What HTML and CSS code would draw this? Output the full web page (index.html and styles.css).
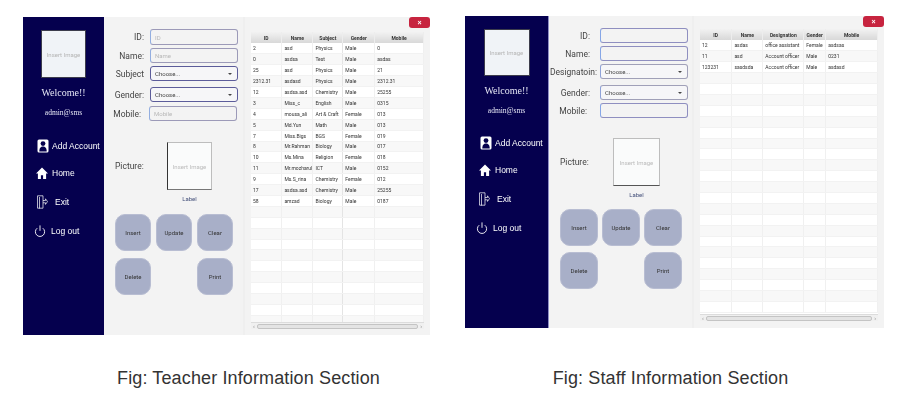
FILE: index.html
```html
<!DOCTYPE html>
<html lang="en">
<head>
    <meta charset="UTF-8" />
    <meta name="viewport" content="width=device-width, initial-scale=1.0" />
    <title>Teacher and Staff Information</title>
    <link rel="stylesheet" href="styles.css">
</head>
<body>
    <div class="figures">
        <figure class="fig fig-teacher">
            <div class="app">
                <aside class="sidebar">
                    <div class="avatar">Insert Image</div>
                    <div class="welcome">Welcome!!</div>
                    <div class="admin">admin@sms</div>
                    <nav class="nav">
                        <a class="nav-item item-add"><svg class="icon" viewBox="0 0 12 14"><rect x="0.5" y="0.5" width="11" height="13" rx="1.5" fill="#fff"/><circle cx="6" cy="4.6" r="2.4" fill="#05004e"/><path d="M2.3 12.4c0-3.6 1.5-5 3.7-5s3.7 1.4 3.7 5z" fill="#05004e"/></svg>Add Account</a>
                        <a class="nav-item item-home"><svg class="icon" viewBox="0 0 12 14"><path d="M6 1.5 0 7.6h1.9V13h3V9.2h2.2V13h3V7.6H12z" fill="#fff"/></svg>Home</a>
                        <a class="nav-item item-exit"><svg class="icon" viewBox="0 0 12 14" fill="none" stroke="#fff" stroke-width="0.7"><path d="M1.5 0.8h5.5v12.4H1.5M1.5 0.8v12.4M3.5 2v11.5M7 5.5h2.5V3.8l2 2.8-2 2.8V7.8H7"/></svg>Exit</a>
                        <a class="nav-item item-logout"><svg class="icon" viewBox="0 0 12 14" fill="none" stroke="#fff" stroke-width="0.9"><path d="M3.2 4.2a4.6 4.6 0 1 0 5.6 0M6 1.4v5.4"/></svg>Log out</a>
                    </nav>
                </aside>
                <main class="main">
                    <form class="form">
                        <label class="row row-first"><span class="row-label">ID:</span><input class="field" type="text" placeholder="ID"></label>
                        <label class="row"><span class="row-label">Name:</span><input class="field" type="text" placeholder="Name"></label>
                        <label class="row"><span class="row-label">Subject</span><span class="select"><select class="field"><option>Choose...</option></select></span></label>
                        <label class="row row-wide"><span class="row-label">Gender:</span><span class="select"><select class="field"><option>Choose...</option></select></span></label>
                        <label class="row row-mobile"><span class="row-label label-mobile">Mobile:</span><input class="field field-mobile" type="text" placeholder="Mobile"></label>
                    </form>
                    <div class="picture">
                        <span class="picture-label">Picture:</span>
                        <div class="picture-col">
                            <div class="picture-box">Insert Image</div>
                            <div class="picture-caption">Label</div>
                        </div>
                    </div>
                    <div class="buttons">
                        <button class="btn" type="button">Insert</button>
                        <button class="btn" type="button">Update</button>
                        <button class="btn" type="button">Clear</button>
                        <button class="btn" type="button">Delete</button>
                        <button class="btn btn-print" type="button">Print</button>
                    </div>
                </main>
                <section class="panel">
                    <button class="close" type="button">&times;</button>
                    <div class="grid">
                        <table class="table">
                            <colgroup><col class="c1"><col class="c2"><col class="c3"><col class="c4"><col class="c5"></colgroup>
                            <thead><tr><th>ID</th><th>Name</th><th>Subject</th><th>Gender</th><th>Mobile</th></tr></thead>
                            <tbody>
                                <tr><td>2</td><td>asd</td><td>Physics</td><td>Male</td><td>0</td></tr>
                                <tr><td>0</td><td>asdsa</td><td>Test</td><td>Male</td><td>asdas</td></tr>
                                <tr><td>25</td><td>asd</td><td>Physics</td><td>Male</td><td>21</td></tr>
                                <tr><td>2312.31</td><td>asdasd</td><td>Physics</td><td>Male</td><td>2312.31</td></tr>
                                <tr><td>12</td><td>asdsa.asd</td><td>Chemistry</td><td>Male</td><td>25255</td></tr>
                                <tr><td>3</td><td>Miss_c</td><td>English</td><td>Male</td><td>0315</td></tr>
                                <tr><td>4</td><td>mousa_ali</td><td>Art &amp; Craft</td><td>Female</td><td>013</td></tr>
                                <tr><td>5</td><td>Md.Yun</td><td>Math</td><td>Male</td><td>013</td></tr>
                                <tr><td>7</td><td>Miss.Bigs</td><td>BGS</td><td>Female</td><td>019</td></tr>
                                <tr><td>8</td><td>Mr.Rahman</td><td>Biology</td><td>Male</td><td>017</td></tr>
                                <tr><td>10</td><td>Ms.Mina</td><td>Religion</td><td>Female</td><td>018</td></tr>
                                <tr><td>11</td><td>Mr.mozharul</td><td>ICT</td><td>Male</td><td>0152</td></tr>
                                <tr><td>9</td><td>Ms.S_rina</td><td>Chemistry</td><td>Female</td><td>012</td></tr>
                                <tr><td>17</td><td>asdsa.asd</td><td>Chemistry</td><td>Male</td><td>25255</td></tr>
                                <tr><td>58</td><td>amzad</td><td>Biology</td><td>Male</td><td>0187</td></tr>
                                <tr><td></td><td></td><td></td><td></td><td></td></tr>
                                <tr><td></td><td></td><td></td><td></td><td></td></tr>
                                <tr><td></td><td></td><td></td><td></td><td></td></tr>
                                <tr><td></td><td></td><td></td><td></td><td></td></tr>
                                <tr><td></td><td></td><td></td><td></td><td></td></tr>
                                <tr><td></td><td></td><td></td><td></td><td></td></tr>
                                <tr><td></td><td></td><td></td><td></td><td></td></tr>
                                <tr><td></td><td></td><td></td><td></td><td></td></tr>
                                <tr><td></td><td></td><td></td><td></td><td></td></tr>
                                <tr><td></td><td></td><td></td><td></td><td></td></tr>
                                <tr><td></td><td></td><td></td><td></td><td></td></tr>
                            </tbody>
                        </table>
                        <div class="scrollbar"><span class="scroll-arrow">&lsaquo;</span><span class="scroll-thumb"></span><span class="scroll-arrow">&rsaquo;</span></div>
                    </div>
                </section>
            </div>
            <figcaption class="caption">Fig: Teacher Information Section</figcaption>
        </figure>

        <figure class="fig fig-staff">
            <div class="app">
                <aside class="sidebar">
                    <div class="avatar">Insert Image</div>
                    <div class="welcome">Welcome!!</div>
                    <div class="admin">admin@sms</div>
                    <nav class="nav">
                        <a class="nav-item item-add"><svg class="icon" viewBox="0 0 12 14"><rect x="0.5" y="0.5" width="11" height="13" rx="1.5" fill="#fff"/><circle cx="6" cy="4.6" r="2.4" fill="#05004e"/><path d="M2.3 12.4c0-3.6 1.5-5 3.7-5s3.7 1.4 3.7 5z" fill="#05004e"/></svg>Add Account</a>
                        <a class="nav-item item-home"><svg class="icon" viewBox="0 0 12 14"><path d="M6 1.5 0 7.6h1.9V13h3V9.2h2.2V13h3V7.6H12z" fill="#fff"/></svg>Home</a>
                        <a class="nav-item item-exit"><svg class="icon" viewBox="0 0 12 14" fill="none" stroke="#fff" stroke-width="0.7"><path d="M1.5 0.8h5.5v12.4H1.5M1.5 0.8v12.4M3.5 2v11.5M7 5.5h2.5V3.8l2 2.8-2 2.8V7.8H7"/></svg>Exit</a>
                        <a class="nav-item item-logout"><svg class="icon" viewBox="0 0 12 14" fill="none" stroke="#fff" stroke-width="0.9"><path d="M3.2 4.2a4.6 4.6 0 1 0 5.6 0M6 1.4v5.4"/></svg>Log out</a>
                    </nav>
                </aside>
                <main class="main">
                    <form class="form">
                        <label class="row"><span class="row-label">ID:</span><input class="field" type="text"></label>
                        <label class="row"><span class="row-label">Name:</span><input class="field" type="text"></label>
                        <label class="row"><span class="row-label label-long">Designatoin:</span><span class="select"><select class="field"><option>Choose...</option></select></span></label>
                        <label class="row row-wide"><span class="row-label">Gender:</span><span class="select"><select class="field"><option>Choose...</option></select></span></label>
                        <label class="row row-mobile"><span class="row-label label-mobile">Mobile:</span><input class="field" type="text"></label>
                    </form>
                    <div class="picture">
                        <span class="picture-label">Picture:</span>
                        <div class="picture-col">
                            <div class="picture-box">Insert Image</div>
                            <div class="picture-caption">Label</div>
                        </div>
                    </div>
                    <div class="buttons">
                        <button class="btn" type="button">Insert</button>
                        <button class="btn" type="button">Update</button>
                        <button class="btn" type="button">Clear</button>
                        <button class="btn" type="button">Delete</button>
                        <button class="btn btn-print" type="button">Print</button>
                    </div>
                </main>
                <section class="panel">
                    <button class="close" type="button">&times;</button>
                    <div class="grid">
                        <table class="table">
                            <colgroup><col class="c1"><col class="c2"><col class="c3"><col class="c4"><col class="c5"></colgroup>
                            <thead><tr><th>ID</th><th>Name</th><th>Designation</th><th>Gender</th><th>Mobile</th></tr></thead>
                            <tbody>
                                <tr><td>12</td><td>asdas</td><td>office assistant</td><td>Female</td><td>asdsas</td></tr>
                                <tr><td>11</td><td>asd</td><td>Account officer</td><td>Male</td><td>0231</td></tr>
                                <tr><td>123231</td><td>sasdsda</td><td>Account officer</td><td>Male</td><td>asdasd</td></tr>
                                <tr><td></td><td></td><td></td><td></td><td></td></tr>
                                <tr><td></td><td></td><td></td><td></td><td></td></tr>
                                <tr><td></td><td></td><td></td><td></td><td></td></tr>
                                <tr><td></td><td></td><td></td><td></td><td></td></tr>
                                <tr><td></td><td></td><td></td><td></td><td></td></tr>
                                <tr><td></td><td></td><td></td><td></td><td></td></tr>
                                <tr><td></td><td></td><td></td><td></td><td></td></tr>
                                <tr><td></td><td></td><td></td><td></td><td></td></tr>
                                <tr><td></td><td></td><td></td><td></td><td></td></tr>
                                <tr><td></td><td></td><td></td><td></td><td></td></tr>
                                <tr><td></td><td></td><td></td><td></td><td></td></tr>
                                <tr><td></td><td></td><td></td><td></td><td></td></tr>
                                <tr><td></td><td></td><td></td><td></td><td></td></tr>
                                <tr><td></td><td></td><td></td><td></td><td></td></tr>
                                <tr><td></td><td></td><td></td><td></td><td></td></tr>
                                <tr><td></td><td></td><td></td><td></td><td></td></tr>
                                <tr><td></td><td></td><td></td><td></td><td></td></tr>
                                <tr><td></td><td></td><td></td><td></td><td></td></tr>
                                <tr><td></td><td></td><td></td><td></td><td></td></tr>
                                <tr><td></td><td></td><td></td><td></td><td></td></tr>
                                <tr><td></td><td></td><td></td><td></td><td></td></tr>
                                <tr><td></td><td></td><td></td><td></td><td></td></tr>
                            </tbody>
                        </table>
                        <div class="scrollbar"><span class="scroll-arrow">&lsaquo;</span><span class="scroll-thumb"></span><span class="scroll-arrow">&rsaquo;</span></div>
                    </div>
                </section>
            </div>
            <figcaption class="caption">Fig: Staff Information Section</figcaption>
        </figure>
    </div>
</body>
</html>
```

FILE: styles.css
```css
* {
    box-sizing: border-box;
}
html, body {
    margin: 0;
    padding: 0;
    background-color: white;
    overflow: hidden;
}
body {
    font-family: Roboto, 'Liberation Sans', sans-serif;
    color: #333;
}
.figures {
    display: flex;
    align-items: flex-start;
    padding-left: 23px;
    gap: 35px;
}
.fig {
    margin: 0;
    flex: none;
}
.fig-teacher {
    width: 407px;
    padding-top: 17px;
}
.fig-staff {
    width: 419px;
    padding-top: 16px;
}
.caption {
    font-family: 'Liberation Sans', Arial, sans-serif;
    font-size: 18px;
    line-height: 20px;
    color: #333;
    text-align: center;
    letter-spacing: 0.13px;
    white-space: nowrap;
}
.fig-teacher .caption {
    margin-top: 33px;
    margin-left: 44px;
}
.fig-staff .caption {
    margin-top: 40px;
    margin-left: -8px;
}

/* app window */
.app {
    display: flex;
    background-color: #f3f3f3;
    filter: blur(0.4px);
}
.fig-teacher .app {
    height: 318px;
}
.fig-staff .app {
    height: 312px;
}
.sidebar {
    flex: none;
    display: flex;
    flex-direction: column;
    align-items: center;
    padding-top: 13px;
    background-color: #05004e;
    color: white;
}
.fig-teacher .sidebar {
    width: 81px;
}
.fig-staff .sidebar {
    width: 84px;
    border-right: 1px solid #8f8fc4;
}
.avatar {
    width: 45px;
    height: 48px;
    display: flex;
    align-items: center;
    justify-content: center;
    background-color: #f0f3f7;
    border: 1px solid #3c3c4c;
    color: #b5b5b5;
    font-size: 6px;
}
.fig-staff .avatar {
    width: 46px;
    height: 47px;
}
.welcome {
    margin-top: 8px;
    font-family: 'Liberation Serif', serif;
    font-size: 10px;
    line-height: 14px;
    color: #e6e6f5;
}
.admin {
    margin-top: 7px;
    font-family: 'Liberation Serif', serif;
    font-size: 7.5px;
    line-height: 12px;
    color: #e6e6f5;
}
.nav {
    align-self: stretch;
    display: flex;
    flex-direction: column;
    gap: 13px;
    margin-top: 19px;
}
.fig-staff .nav {
    margin-top: 18px;
}
.nav-item {
    display: flex;
    align-items: center;
    height: 16px;
    font-family: 'Liberation Sans', Arial, sans-serif;
    font-size: 8.5px;
    color: white;
}
.icon {
    width: 12px;
    height: 14px;
    flex: none;
}
.item-add {
    padding-left: 14px;
    gap: 3px;
}
.item-home {
    padding-left: 13px;
    gap: 4px;
    margin-top: -2px;
}
.item-exit {
    padding-left: 13px;
    gap: 7px;
}
.item-logout {
    padding-left: 11px;
    gap: 5px;
}
.fig-staff .item-add {
    padding-left: 15px;
}
.fig-staff .item-home {
    padding-left: 14px;
}
.fig-staff .item-exit {
    padding-left: 13px;
    gap: 7px;
}
.fig-staff .item-logout {
    padding-left: 11px;
}

/* form */
.main {
    flex: none;
    padding: 12px 0 0 11px;
    border-right: 2px solid #efefef;
}
.fig-teacher .main {
    width: 141px;
}
.fig-staff .main {
    width: 145px;
}
.form {
    display: flex;
    flex-direction: column;
    gap: 3px;
}
.row {
    display: grid;
    height: 15px;
    align-items: center;
}
.row-first {
    height: 16px;
}
.fig-teacher .row {
    grid-template-columns: 35px 88px;
}
.fig-staff .row {
    grid-template-columns: 40px 88px;
}
.row-wide {
    margin-top: 3px;
}
.fig-teacher .row-mobile {
    margin-top: 1px;
}
.row-label {
    display: flex;
    justify-content: flex-end;
    padding-right: 6px;
    font-size: 8.5px;
    white-space: nowrap;
    color: #444;
}
.fig-staff .row-label {
    padding-right: 10px;
}
.fig-staff .label-long {
    padding-right: 3px;
}
.fig-staff .label-mobile {
    padding-right: 13px;
}
.fig-teacher .label-mobile {
    padding-right: 9px;
}
.field {
    display: block;
    width: 100%;
    height: 15px;
    padding: 0 4px;
    background-color: #f3f3f3;
    border: 1px solid #9c9ab8;
    border-left-color: #93aee0;
    border-radius: 3px;
    font-family: Roboto, sans-serif;
    font-size: 6px;
    color: #444;
    outline: none;
}
.row-first .field {
    height: 16px;
}
.field-mobile {
    margin-left: -1px;
}
.field::placeholder {
    color: #b8b8b8;
}
.fig-staff input.field {
    border-color: #8f8fc0;
    border-left-color: #86a6e6;
}
.select {
    position: relative;
    display: block;
}
.select .field {
    appearance: none;
    border-color: #5c5c9a;
    background-color: #f6f6f8;
}
.fig-staff .select .field {
    border-color: #a0a0b8;
    border-left-color: #8fa2d8;
}
.select::after {
    content: "";
    position: absolute;
    top: 7px;
    right: 6px;
    border-left: 2px solid transparent;
    border-right: 2px solid transparent;
    border-top: 2.5px solid #444;
}

/* picture */
.picture {
    display: flex;
    align-items: flex-start;
    margin-top: 21px;
}
.fig-staff .picture {
    margin-top: 20px;
}
.picture-label {
    width: 52px;
    margin-top: 19px;
    font-size: 8.5px;
    color: #444;
}
.fig-staff .picture-label {
    width: 53px;
}
.picture-col {
    display: flex;
    flex-direction: column;
    align-items: center;
}
.picture-box {
    width: 45px;
    height: 48px;
    display: flex;
    align-items: center;
    justify-content: center;
    background-color: #fafbfb;
    border: 1px solid #bdbdbd;
    border-left-color: #333;
    border-bottom-color: #777;
    color: #bbb;
    font-size: 6px;
}
.fig-staff .picture-box {
    width: 47px;
    border-color: #bdbdbd;
    border-bottom-color: #555;
}
.picture-caption {
    margin-top: 4px;
    font-size: 6px;
    line-height: 10px;
    color: #44507a;
}

/* action buttons */
.buttons {
    display: grid;
    margin-top: 10px;
    row-gap: 7px;
}
.fig-staff .buttons {
    margin-top: 9px;
    row-gap: 6px;
}
.fig-teacher .buttons {
    grid-template-columns: repeat(3, 36px);
    column-gap: 5px;
}
.fig-staff .buttons {
    grid-template-columns: repeat(3, 38px);
    column-gap: 4px;
}
.btn {
    height: 37px;
    padding: 0;
    background-color: #a8afc8;
    border: 1px solid #b8bdd2;
    border-radius: 10px;
    font-family: Roboto, sans-serif;
    font-size: 6px;
    color: #333;
}
.btn-print {
    grid-column: 3;
}

/* table panel */
.panel {
    position: relative;
    flex: 1;
    min-width: 0;
    padding-left: 6px;
}
.fig-teacher .panel {
    padding-top: 15px;
}
.fig-staff .panel {
    padding-top: 13px;
}
.close {
    position: absolute;
    top: 0;
    right: 0;
    width: 21px;
    height: 11px;
    padding: 0;
    background-color: #c7243f;
    border: none;
    border-radius: 3px;
    color: white;
    font-size: 7px;
    font-weight: 700;
    line-height: 11px;
}
.grid {
    display: flex;
    flex-direction: column;
    overflow: hidden;
    background-color: white;
}
.fig-teacher .grid {
    width: 173px;
    height: 297px;
}
.fig-staff .grid {
    width: 178px;
    height: 292px;
}
.table {
    flex: 1;
    display: block;
    min-height: 0;
    overflow: hidden;
    width: 100%;
    border-collapse: collapse;
    table-layout: fixed;
    font-size: 5px;
}
.fig-teacher .c1 { width: 31px; }
.fig-teacher .c2 { width: 31px; }
.fig-teacher .c3 { width: 30px; }
.fig-teacher .c4 { width: 32px; }
.fig-teacher .c5 { width: 49px; }
.fig-staff .c1 { width: 32px; }
.fig-staff .c2 { width: 31px; }
.fig-staff .c3 { width: 41px; }
.fig-staff .c4 { width: 22px; }
.fig-staff .c5 { width: 52px; }
.table th {
    height: 11px;
    padding: 0;
    background: linear-gradient(#f2f2f2, #d8d8d8);
    border-right: 1px solid #ededed;
    font-weight: 700;
    color: #333;
    text-align: center;
}
.table td {
    height: 10.9px;
    padding: 0 0 0 2px;
    border-right: 1px solid #f0f0f0;
    border-bottom: 1px solid #f2f2f2;
    color: #333;
    white-space: nowrap;
    overflow: hidden;
}
.fig-teacher .table td:nth-child(3) {
    border-right-color: #e4e4e4;
}
.table tbody tr:nth-child(even) {
    background-color: #f8f8f8;
}
.scrollbar {
    flex: none;
    display: flex;
    align-items: center;
    height: 7px;
    padding: 0 2px;
    background-color: #f0f0f0;
    border-top: 1px solid #dcdcdc;
}
.scroll-arrow {
    font-size: 6px;
    line-height: 6px;
    color: #888;
}
.scroll-thumb {
    flex: 1;
    height: 5px;
    margin: 0 2px;
    background-color: #e4e4e4;
    border: 1px solid #c4c4c4;
    border-radius: 2px;
}
```
